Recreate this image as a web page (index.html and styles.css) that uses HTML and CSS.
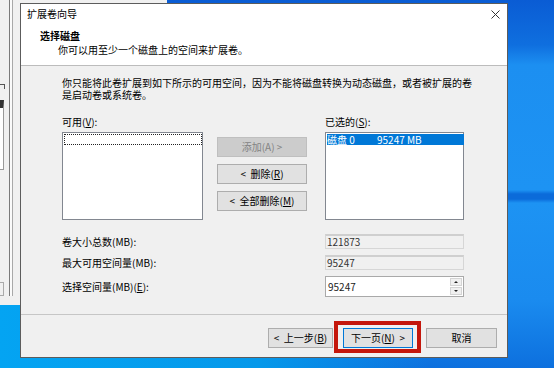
FILE: index.html
```html
<!DOCTYPE html>
<html lang="zh-CN">
<head>
    <meta charset="UTF-8">
    <meta name="viewport" content="width=device-width, initial-scale=1.0">
    <title>扩展卷向导</title>
    <link rel="stylesheet" href="styles.css">
</head>
<body>
    <!-- window behind the wizard -->
    <div class="behind">
        <div class="behind-pane">
            <div class="behind-tick"></div>
            <div class="behind-list"></div>
            <div class="behind-btn"></div>
        </div>
        <div class="behind-edge"></div>
    </div>

    <div class="wizard">
        <div class="wizard-head">
            <div class="title-row">
                <span class="title">扩展卷向导</span>
                <svg class="close" width="9" height="9" viewBox="0 0 9 9">
                    <path d="M0.5 0.5 L8.5 8.5 M8.5 0.5 L0.5 8.5" stroke="#333" stroke-width="1" fill="none"/>
                </svg>
            </div>
            <div class="step-title">选择磁盘</div>
            <div class="step-desc">你可以用至少一个磁盘上的空间来扩展卷。</div>
        </div>

        <div class="wizard-body">
            <p class="intro">你只能将此卷扩展到如下所示的可用空间，因为不能将磁盘转换为动态磁盘，或者被扩展的卷是启动卷或系统卷。</p>

            <div class="picker">
                <label class="pick-label">可用(<u>V</u>):</label>
                <span></span>
                <label class="pick-label">已选的(<u>S</u>):</label>

                <div class="listbox">
                    <div class="focus-row"></div>
                </div>
                <div class="move-buttons">
                    <button class="btn" disabled>添加(A) &gt;</button>
                    <button class="btn">&lt;&nbsp; 删除(<u>R</u>)</button>
                    <button class="btn">&lt;&nbsp; 全部删除(<u>M</u>)</button>
                </div>
                <div class="listbox">
                    <div class="sel-row"><span class="disk">磁盘 0</span><span>95247 MB</span></div>
                </div>
            </div>

            <div class="sizes">
                <span class="size-label">卷大小总数(MB):</span>
                <div class="field readonly">121873</div>
                <span class="size-label">最大可用空间量(MB):</span>
                <div class="field readonly">95247</div>
                <span class="size-label">选择空间量(MB)(<u>E</u>):</span>
                <div class="field spin">
                    <span class="spin-value">95247</span>
                    <div class="spin-btns">
                        <span class="spin-up"></span>
                        <span class="spin-down"></span>
                    </div>
                </div>
            </div>
        </div>

        <div class="wizard-foot">
            <button class="btn back">&lt;&nbsp; 上一步(<u>B</u>)</button>
            <button class="btn next">下一页(<u>N</u>)&nbsp; &gt;</button>
            <button class="btn cancel">取消</button>
        </div>
    </div>

    <!-- red annotation around the next button -->
    <div class="highlight"></div>
</body>
</html>
```

FILE: styles.css
```css
* {
    box-sizing: border-box;
}

body {
    margin: 0;
    width: 554px;
    height: 368px;
    position: relative;
    overflow: hidden;
    font-family: "Noto Sans CJK SC", "Microsoft YaHei", sans-serif;
    font-size: 10px;
    color: #000;
    background:
        linear-gradient(to right, #04a4f2 0, #0598ea 260px, rgba(5,152,234,0) 430px) 0 305px / 100% 63px no-repeat,
        linear-gradient(to bottom, #0a5cd4 0, #0f6fdf 45px, #1c8ff1 65px, #1d93f3 190px, #0b6bda 194px, #0b6bda 199px, #1d93f3 203px, #1a8bef 300px, #0d70de 368px);
}

/* window behind */
.behind {
    position: absolute;
    left: 0;
    top: 0;
    width: 167px;
    height: 305px;
    background: #f0f0f0;
    display: flex;
}

.behind-pane {
    width: 9px;
    padding-top: 84px;
}

.behind-tick {
    width: 5px;
    height: 5px;
    border-top: 1px solid #555;
    border-right: 1px solid #555;
}

.behind-list {
    margin-top: 11px;
    width: 4px;
    height: 70px;
    background: #fff;
    border: 1px solid #999;
    border-left: none;
    border-top: 8px solid #333;
}

.behind-btn {
    margin-top: 112px;
    width: 4px;
    height: 14px;
    border: 1px solid #aaa;
    border-left: none;
}

.behind-edge {
    width: 4px;
    height: 296px;
    border-left: 1px solid #7a7a7a;
    border-right: 1px solid #a8a8a8;
    background: #fafafa;
}

/* wizard dialog */
.wizard {
    position: absolute;
    left: 20px;
    top: 3px;
    width: 488px;
    height: 355px;
    border: 1px solid #5c5c5c;
    background: #f0f0f0;
    display: flex;
    flex-direction: column;
}

.wizard-head {
    height: 62px;
    background: #fff;
    border-bottom: 1px solid #bcbcbc;
    padding: 3px 7px 0 6px;
}

.title-row {
    display: flex;
    justify-content: space-between;
    align-items: center;
    line-height: 14px;
}

.close {
    display: block;
}

.step-title {
    margin-top: 9px;
    padding-left: 13px;
    font-weight: bold;
    line-height: 12px;
}

.step-desc {
    margin-top: 2px;
    padding-left: 31px;
    line-height: 12px;
}

.wizard-body {
    flex: 1;
    padding: 11px 0 0 41px;
}

.intro {
    margin: 0;
    width: 412px;
    line-height: 12px;
}

.picker {
    margin-top: 15px;
    display: grid;
    grid-template-columns: 141px 122px 139px;
    grid-template-rows: 12px 88px;
    row-gap: 4px;
}

.pick-label {
    line-height: 12px;
}

.listbox {
    background: #fff;
    border: 1px solid #828790;
    padding: 1px 0 0 1px;
}

.focus-row {
    width: 138px;
    height: 11px;
    border: 1px dotted #222;
}

.sel-row {
    width: 137px;
    height: 11px;
    line-height: 11px;
    background: #0078d7;
    color: #fff;
    display: flex;
}

.disk {
    width: 50px;
}

.move-buttons {
    padding: 5px 0 0 14px;
    display: flex;
    flex-direction: column;
    gap: 7px;
}

.move-buttons .btn {
    width: 90px;
}

.btn {
    height: 20px;
    padding: 0;
    font: inherit;
    line-height: 18px;
    color: #000;
    background: #e1e1e1;
    border: 1px solid #adadad;
}

.btn:disabled {
    background: #cccccc;
    border-color: #bfbfbf;
    color: #838383;
}

.sizes {
    margin-top: 14px;
    display: grid;
    grid-template-columns: 263px 139px;
    grid-template-rows: 15px 15px 21px;
    row-gap: 6px;
}

.size-label {
    align-self: center;
    line-height: 12px;
}

.field {
    line-height: 12px;
}

.readonly {
    background: #f0f0f0;
    border: 1px solid #d6d6d6;
    border-top: 2px solid #cfcfcf;
    padding-left: 1px;
    color: #333;
}

.spin {
    background: #fff;
    border: 1px solid #a9a9a9;
    display: flex;
    align-items: center;
}

.spin-value {
    padding-left: 2px;
    color: #222;
}

.spin-btns {
    margin-left: auto;
    margin-right: 1px;
    width: 12px;
    height: 17px;
    display: flex;
    flex-direction: column;
    gap: 1px;
}

.spin-up,
.spin-down {
    flex: 1;
    background: #f0f0f0;
    border: 1px solid #d4d4d4;
    display: flex;
    justify-content: center;
    align-items: center;
}

.spin-up::before {
    content: "";
    border-left: 2px solid transparent;
    border-right: 2px solid transparent;
    border-bottom: 2px solid #222;
}

.spin-down::before {
    content: "";
    border-left: 2px solid transparent;
    border-right: 2px solid transparent;
    border-top: 2px solid #222;
}

.wizard-foot {
    height: 43px;
    border-top: 1px solid #c6c6c6;
    padding: 13px 10px 0 0;
    display: flex;
    justify-content: flex-end;
    align-items: flex-start;
}

.back {
    width: 65px;
    margin-right: 10px;
}

.next {
    width: 70px;
    margin-right: 13px;
    border-color: #0078d7;
}

.cancel {
    width: 71px;
}

.highlight {
    position: absolute;
    left: 334px;
    top: 321px;
    width: 87px;
    height: 32px;
    border: 4px solid #c4170c;
}
```
